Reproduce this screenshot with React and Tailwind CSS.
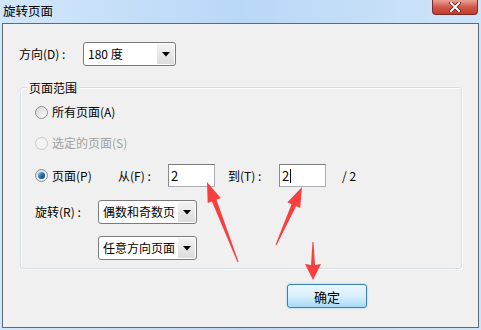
import React from 'react';

const font = { fontFamily: '"Noto Sans CJK SC", "Noto Sans", sans-serif' };

function Radio({ checked, disabled }) {
  return (
    <span
      className={`relative flex h-[13px] w-[13px] items-center justify-center rounded-full border ${
        disabled ? 'border-[#c8c8c8] bg-[#f4f4f4]' : 'border-[#8e8f8f] bg-gradient-to-br from-[#d6d6d6] to-[#fbfbfb]'
      }`}
    >
      {checked && (
        <span className="h-[7px] w-[7px] rounded-full bg-gradient-to-br from-[#8bd0f5] via-[#1f6fb2] to-[#0a3f77]" />
      )}
    </span>
  );
}

function Select({ text, width }) {
  return (
    <div className={`flex h-[24px] ${width} items-stretch rounded-[3px] border border-[#7a7a7a] bg-white p-[1px]`}>
      <div className="flex flex-1 items-center whitespace-nowrap pl-[3px] text-[12px] leading-none text-black">
        {text}
      </div>
      <div className="flex w-[17px] shrink-0 items-center justify-center bg-gradient-to-b from-[#f3f3f3] to-[#dcdcdc]">
        <svg width="8" height="5" viewBox="0 0 8 5">
          <path d="M0 0h8L4 4.5z" fill="#000" />
        </svg>
      </div>
    </div>
  );
}

function Input({ value, caret }) {
  return (
    <div className="flex h-[23px] w-[47px] items-center border border-[#abadb3] border-t-[#7a7a7a] border-l-[#8a8a8a] bg-white pl-[2px] text-[13px] leading-none text-black">
      {value}
      {caret && <span className="ml-[1px] h-[14px] w-[1px] bg-black" />}
    </div>
  );
}

export default function App() {
  return (
    <div
      className="relative h-[330px] w-[481px] overflow-hidden whitespace-nowrap bg-gradient-to-r from-[#d2e6fa] via-[#b9d8f7] to-[#cfe4f9] text-[12px] text-black"
      style={font}
    >
      {/* title bar */}
      <div className="relative flex h-[23px] items-center pl-[3px]">
        <span className="text-[12.5px] leading-none text-black">旋转页面</span>
        <div className="absolute right-[3px] top-0 flex h-[15px] w-[46px] items-center justify-center rounded-b-[4px] border border-t-0 border-[#7e2c25] bg-gradient-to-b from-[#e8a296] via-[#d0594a] to-[#c23a2c]">
          <svg width="12" height="10" viewBox="0 0 12 10">
            <path d="M2 1l8 8M10 1l-8 8" stroke="#5a1d18" strokeWidth="3.6" strokeLinecap="square" />
            <path d="M2 1l8 8M10 1l-8 8" stroke="#fff" strokeWidth="2" strokeLinecap="square" />
          </svg>
        </div>
      </div>

      {/* window body */}
      <div className="mx-[2px] h-[305px] border border-[#5d6b78] bg-[#f0f0f0]">
        <div className="flex items-center pl-[16px] pt-[18px]">
          <span className="w-[64px] leading-none">方向(D) :</span>
          <Select text="180 度" width="w-[93px]" />
        </div>

        <div className="relative ml-[17px] mt-[21px] h-[182px] w-[442px] rounded-[3px] border border-[#d5dfe5] shadow-[inset_1px_1px_0_#fff,1px_1px_0_#fff]">
          <span className="absolute left-[6px] top-[-8px] bg-[#f0f0f0] px-[2px] leading-[16px]">页面范围</span>

          <div className="flex flex-col pl-[14px] pt-[16px]">
            <div className="flex h-[16px] items-center gap-[4px]">
              <Radio />
              <span className="leading-none">所有页面(A)</span>
            </div>
            <div className="mt-[15px] flex h-[16px] items-center gap-[4px] text-[#a0a0a0]">
              <Radio disabled />
              <span className="leading-none">选定的页面(S)</span>
            </div>
            <div className="mt-[13px] flex h-[23px] items-center">
              <Radio checked />
              <span className="ml-[4px] w-[66px] leading-none">页面(P)</span>
              <span className="w-[50px] leading-none">从(F) :</span>
              <Input value="2" />
              <span className="ml-[13px] w-[51px] leading-none">到(T) :</span>
              <Input value="2" caret />
              <span className="ml-[16px] leading-none">/ 2</span>
            </div>
            <div className="mt-[13px] flex h-[24px] items-center">
              <span className="w-[63px] leading-none">旋转(R) :</span>
              <Select text="偶数和奇数页" width="w-[99px]" />
            </div>
            <div className="ml-[63px] mt-[12px] flex">
              <Select text="任意方向页面" width="w-[99px]" />
            </div>
          </div>
        </div>

        <div className="ml-[284px] mt-[15px] flex h-[24px] w-[80px] items-center justify-center rounded-[3px] border border-[#3c7fb1] bg-gradient-to-b from-[#eaf6fd] via-[#d9f0fc] to-[#a7d9f5] text-[13px] leading-none shadow-[0_0_2px_#7dc8f0]">
          确定
        </div>
      </div>

      {/* red annotation arrows */}
      <svg className="pointer-events-none absolute left-0 top-0" width="481" height="330" viewBox="0 0 481 330">
        <polygon
          fill="#f73f3f"
          points="207,182 220.7,198.1 216.5,199.7 238.5,261.8 237.5,262.2 211.9,201.5 207.7,203.1"
        />
        <polygon
          fill="#f73f3f"
          points="302,187 300.2,208.1 296.1,206.2 276.5,245.2 275.5,244.8 291.5,204.2 287.4,202.3"
        />
        <polygon fill="#f73f3f" points="313,280 321,264 315,265 313.5,242 312.5,242 311,265 305,264" />
      </svg>
    </div>
  );
}
